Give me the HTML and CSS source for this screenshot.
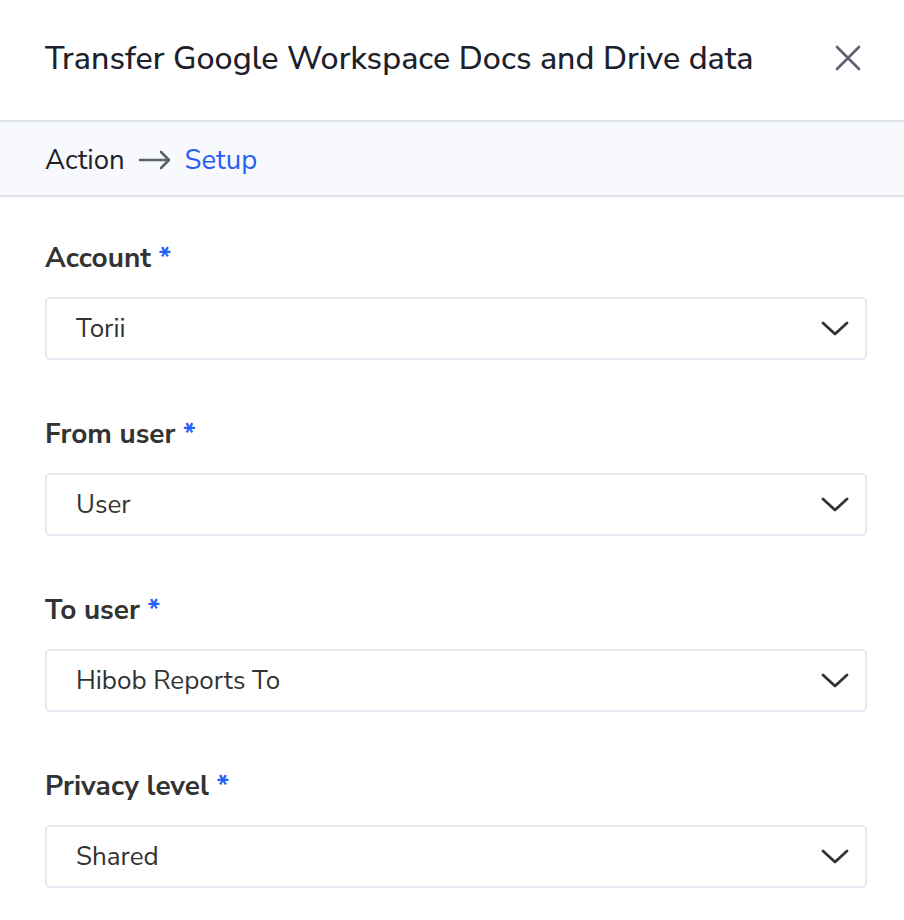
FILE: index.html
```html
<!DOCTYPE html>
<html lang="en">
<head>
    <meta charset="UTF-8">
    <meta name="viewport" content="width=device-width, initial-scale=1.0">
    <title>Transfer data</title>
    <link rel="stylesheet" href="styles.css">
</head>
<body>
    <div class="drawer">
        <div class="drawer-header">
            <h1 class="drawer-title">Transfer Google Workspace Docs and Drive data</h1>
            <button class="close-button" aria-label="Close">
                <svg width="26" height="26" viewBox="0 0 26 26"><path d="M2 2 L24 24 M24 2 L2 24" stroke="#5b6270" stroke-width="2.6" stroke-linecap="round"/></svg>
            </button>
        </div>
        <div class="breadcrumb">
            <span class="crumb">Action</span>
            <svg class="crumb-arrow" width="34" height="20" viewBox="0 0 34 20"><path d="M2 10 H31 M23 2 L31 10 L23 18" fill="none" stroke="#5b6270" stroke-width="2.6" stroke-linecap="round" stroke-linejoin="round"/></svg>
            <span class="crumb crumb-active">Setup</span>
        </div>
        <div class="form">
            <div class="field">
                <label class="field-label">Account <span class="required">*</span></label>
                <div class="select-box">
                    <span>Torii</span>
                    <svg width="28" height="16" viewBox="0 0 28 16"><path d="M2 2 L14 13 L26 2" fill="none" stroke="#333" stroke-width="2.8" stroke-linecap="round" stroke-linejoin="round"/></svg>
                </div>
            </div>
            <div class="field">
                <label class="field-label">From user <span class="required">*</span></label>
                <div class="select-box">
                    <span>User</span>
                    <svg width="28" height="16" viewBox="0 0 28 16"><path d="M2 2 L14 13 L26 2" fill="none" stroke="#333" stroke-width="2.8" stroke-linecap="round" stroke-linejoin="round"/></svg>
                </div>
            </div>
            <div class="field">
                <label class="field-label">To user <span class="required">*</span></label>
                <div class="select-box">
                    <span>Hibob Reports To</span>
                    <svg width="28" height="16" viewBox="0 0 28 16"><path d="M2 2 L14 13 L26 2" fill="none" stroke="#333" stroke-width="2.8" stroke-linecap="round" stroke-linejoin="round"/></svg>
                </div>
            </div>
            <div class="field">
                <label class="field-label">Privacy level <span class="required">*</span></label>
                <div class="select-box">
                    <span>Shared</span>
                    <svg width="28" height="16" viewBox="0 0 28 16"><path d="M2 2 L14 13 L26 2" fill="none" stroke="#333" stroke-width="2.8" stroke-linecap="round" stroke-linejoin="round"/></svg>
                </div>
            </div>
        </div>
    </div>
</body>
</html>
```

FILE: styles.css
```css
body {
    margin: 0;
    font-family: "Nunito Sans", Lato, "Open Sans", sans-serif;
    background: #fff;
    color: #333;
}
.drawer {
    width: 904px;
}
.drawer-header {
    height: 122px;
    display: flex;
    align-items: center;
    justify-content: space-between;
    padding: 0 43px 4px 45px;
    border-bottom: 2px solid #dde2ea;
    box-sizing: border-box;
}
.drawer-title {
    margin: 0;
    font-size: 32.2px;
    letter-spacing: 0.05px;
    font-weight: 500;
    color: #1c212c;
}
.close-button {
    background: none;
    border: none;
    padding: 0;
    cursor: pointer;
    display: flex;
}
.breadcrumb {
    height: 75px;
    background: #f7f9fc;
    border-bottom: 2px solid #dde2ea;
    display: flex;
    align-items: center;
    gap: 13px;
    padding: 2px 45px 0;
    box-sizing: border-box;
    font-size: 27.5px;
}
.crumb {
    color: #1c212c;
}
.crumb-active {
    color: #2660f5;
}
.form {
    padding: 43px 37px 0 45px;
}
.field {
    margin-bottom: 56px;
}
.field-label {
    display: block;
    font-size: 28px;
    line-height: 36px;
    font-weight: 700;
    color: #333;
    margin-bottom: 21px;
}
.required {
    color: #2660f5;
}
.select-box {
    height: 63px;
    border: 2px solid #e6eaf3;
    border-radius: 5px;
    display: flex;
    align-items: center;
    justify-content: space-between;
    padding: 0 16px 0 29px;
    box-sizing: border-box;
    font-size: 26px;
    color: #333;
}
```
